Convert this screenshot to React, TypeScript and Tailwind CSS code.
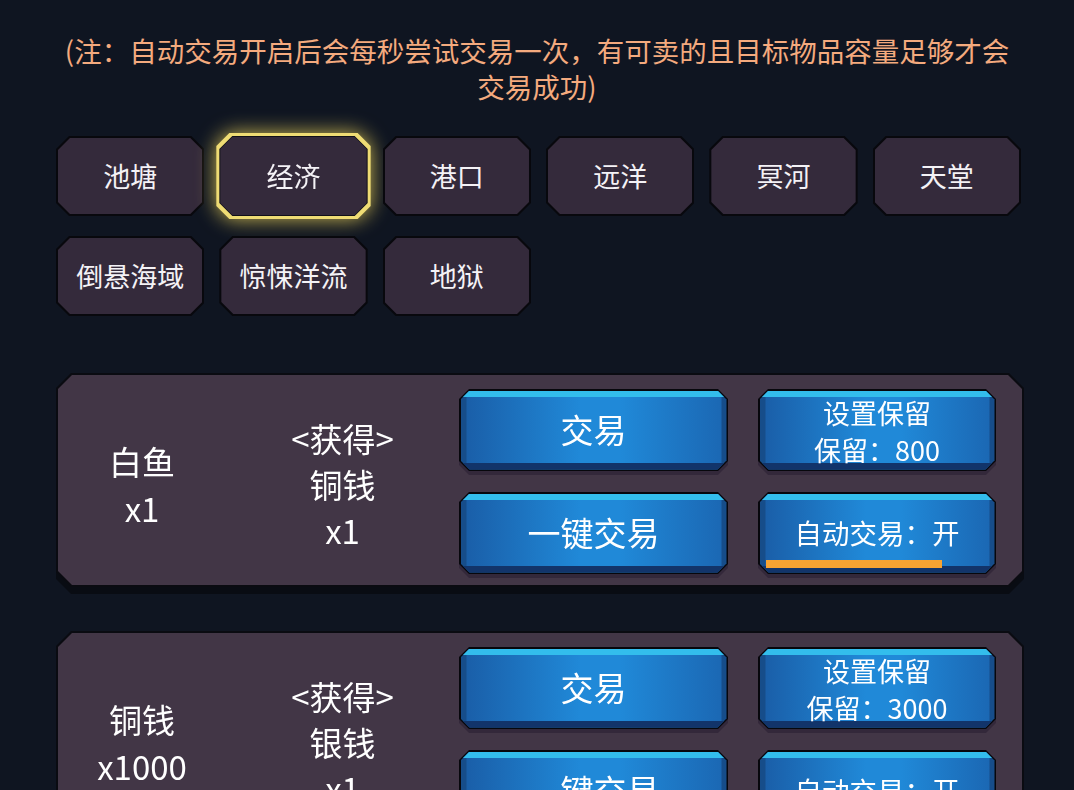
import React from 'react';

// chamfered-corner shapes used for tabs, panels and buttons
const tabOuter =
  '[clip-path:polygon(13px_0,calc(100%_-_13px)_0,100%_13px,100%_calc(100%_-_13px),calc(100%_-_13px)_100%,13px_100%,0_calc(100%_-_13px),0_13px)]';
const tabInner =
  '[clip-path:polygon(12px_0,calc(100%_-_12px)_0,100%_12px,100%_calc(100%_-_12px),calc(100%_-_12px)_100%,12px_100%,0_calc(100%_-_12px),0_12px)]';
const panelOuter =
  '[clip-path:polygon(15px_0,calc(100%_-_15px)_0,100%_15px,100%_calc(100%_-_15px),calc(100%_-_15px)_100%,15px_100%,0_calc(100%_-_15px),0_15px)]';
const panelInner =
  '[clip-path:polygon(14px_0,calc(100%_-_14px)_0,100%_14px,100%_calc(100%_-_14px),calc(100%_-_14px)_100%,14px_100%,0_calc(100%_-_14px),0_14px)]';
const btnOuter =
  '[clip-path:polygon(10px_0,calc(100%_-_10px)_0,100%_10px,100%_calc(100%_-_10px),calc(100%_-_10px)_100%,10px_100%,0_calc(100%_-_10px),0_10px)]';
const btnInner =
  '[clip-path:polygon(9px_0,calc(100%_-_9px)_0,100%_9px,100%_calc(100%_-_9px),calc(100%_-_9px)_100%,9px_100%,0_calc(100%_-_9px),0_9px)]';

const tabs = ['池塘', '经济', '港口', '远洋', '冥河', '天堂', '倒悬海域', '惊悚洋流', '地狱'];

const trades = [
  { cost: '白鱼', costQty: 'x1', gain: '铜钱', gainQty: 'x1', keep: 800, progress: 75 },
  { cost: '铜钱', costQty: 'x1000', gain: '银钱', gainQty: 'x1', keep: 3000, progress: 40 },
];

const Tab: React.FC<{ label: string; active?: boolean }> = ({ label, active }) => {
  if (active) {
    return (
      <div className="-m-[3px] drop-shadow-[0_0_10px_rgba(240,214,90,0.85)]">
        <div className={`${tabOuter} bg-[#efdc74] p-[3px]`}>
          <div className={`${tabOuter} bg-[#111018] p-[1px]`}>
            <div className={`${tabInner} bg-[#342a3b] h-[78px] flex items-center justify-center text-[27px] text-[#f4f2f6]`}>
              {label}
            </div>
          </div>
        </div>
      </div>
    );
  }
  return (
    <div className={`${tabOuter} bg-[#08080d] p-[2px]`}>
      <div className={`${tabInner} bg-[#342a3b] h-[76px] flex items-center justify-center text-[27px] text-[#f4f2f6]`}>
        {label}
      </div>
    </div>
  );
};

const BlueButton: React.FC<{ children: React.ReactNode; className?: string; progress?: number }> = ({
  children,
  className = '',
  progress,
}) => (
  <div className="drop-shadow-[0_4px_0_#33283a]">
    <div className={`${btnOuter} bg-[#07070c] p-[1.5px]`}>
      <div
        className={`${btnInner} relative h-[79px] flex flex-col items-center justify-center text-white [background:linear-gradient(to_bottom,#33bdec_0,#33bdec_6px,transparent_6px,transparent_calc(100%_-_7px),#12346a_calc(100%_-_7px)),linear-gradient(to_right,#164d8a_0,#164d8a_5px,#1a5fa9_6px,#2089d8_45%,#2089d8_60%,#1b68b4_calc(100%_-_6px),#164d8a_calc(100%_-_5px))] ${className}`}
      >
        {children}
        {progress !== undefined && (
          <div className="absolute left-[6px] bottom-[5px] h-[8px] bg-[#f7a332]" style={{ width: `${progress}%` }} />
        )}
      </div>
    </div>
  </div>
);

const TradePanel: React.FC<(typeof trades)[number]> = ({ cost, costQty, gain, gainQty, keep, progress }) => (
  <div className="drop-shadow-[0_7px_0_#090c13]">
    <div className={`${panelOuter} bg-[#0a0b11] p-[2px]`}>
      <div className={`${panelInner} bg-[#423646] flex items-center pt-[14px] pb-[11px] pr-[26px] text-white`}>
        <div className="w-[168px] text-center text-[33px] leading-[47px] pt-[6px]">
          <div>{cost}</div>
          <div>{costQty}</div>
        </div>
        <div className="w-[233px] text-center text-[33px] leading-[46px] pt-[4px]">
          <div>&lt;获得&gt;</div>
          <div>{gain}</div>
          <div>{gainQty}</div>
        </div>
        <div className="grid grid-cols-[269px_238px] gap-x-[30px] gap-y-[21px]">
          <BlueButton className="text-[33px]">交易</BlueButton>
          <BlueButton className="text-[27px] leading-[37px] pt-[2px]">
            <div>设置保留</div>
            <div>保留：{keep}</div>
          </BlueButton>
          <BlueButton className="text-[33px]">一键交易</BlueButton>
          <BlueButton className="text-[27.5px]" progress={progress}>
            自动交易：开
          </BlueButton>
        </div>
      </div>
    </div>
  </div>
);

export default function App() {
  return (
    <div className="h-screen overflow-hidden bg-[#0f1521] font-['Noto_Sans_CJK_SC',sans-serif]">
      <p className="w-[968px] mx-auto pt-[32px] text-center text-[27.5px] leading-[36px] text-[#f4aa7e]">
        (注：自动交易开启后会每秒尝试交易一次，有可卖的且目标物品容量足够才会交易成功)
      </p>

      <div className="ml-[56px] w-[965px] mt-[32px] grid grid-cols-6 gap-x-[15px] gap-y-[20px]">
        {tabs.map((t) => (
          <Tab key={t} label={t} active={t === '经济'} />
        ))}
      </div>

      <div className="ml-[56px] w-[968px] mt-[57px] flex flex-col gap-[44px]">
        {trades.map((t) => (
          <TradePanel key={t.cost} {...t} />
        ))}
      </div>
    </div>
  );
}
